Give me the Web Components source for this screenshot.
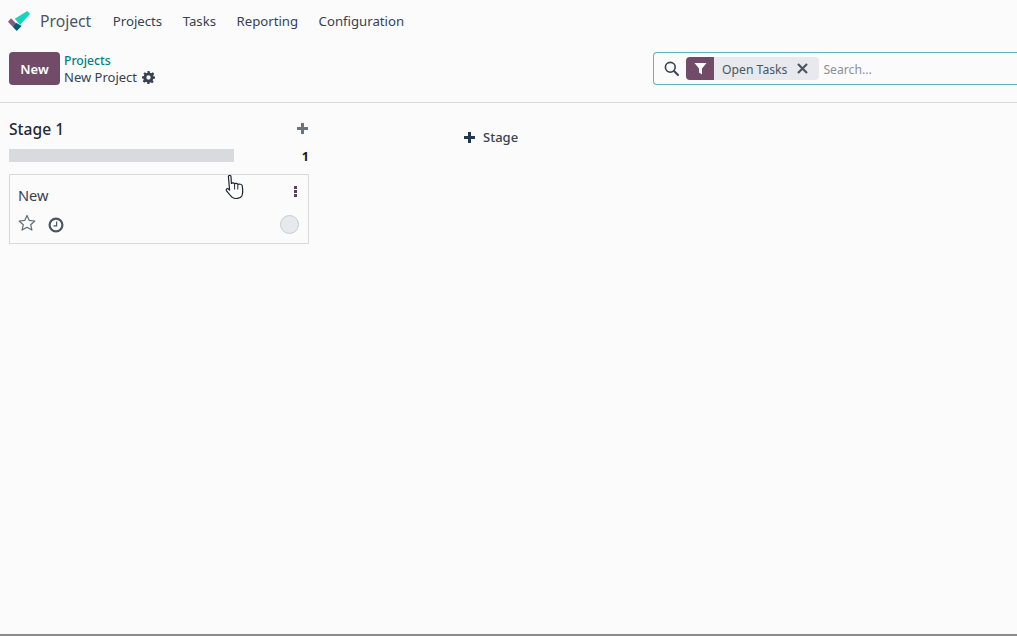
<!DOCTYPE html>
<html>
<head>
<meta charset="utf-8">
<title>Project</title>
<style>
  html, body { margin: 0; height: 100%; }
  body {
    height: 636px;
    overflow: hidden;
    background: #fbfbfb;
    font-family: "Noto Sans", "Open Sans", sans-serif;
    color: #374151;
    display: flex;
    flex-direction: column;
    position: relative;
  }
</style>
</head>
<body>
<app-navbar></app-navbar>
<control-panel></control-panel>
<kanban-board>
  <kanban-column title="Stage 1" count="1">
    <kanban-card title="New"></kanban-card>
  </kanban-column>
</kanban-board>
<hand-cursor></hand-cursor>

<script>
// Top navigation bar
class AppNavbar extends HTMLElement {
  constructor() {
    super();
    this.attachShadow({ mode: 'open' });
    this.shadowRoot.innerHTML = `
      <style>
        :host { display: flex; align-items: center; height: 42px; flex: none; padding-left: 8px; }
        svg { width: 22px; height: 20px; flex: none; margin-right: 10px; }
        .brand { font-size: 15.7px; color: #4b5563; margin-right: 21.5px; }
        nav { display: flex; gap: 20.5px; font-size: 13.2px; color: #374151; }
      </style>
      <svg viewBox="0 0 22 20">
        <path d="M0 10.7 L3 7.3 L8 12.3 L4.7 15.7 Z" fill="#875a7b"/>
        <path d="M4.7 15.7 L8 11.7 L13.7 15 L8.7 20 Z" fill="#005e7a"/>
        <path d="M19.3 0 L22 3 L12 14 L6.8 7.8 Z" fill="#1ad3bb"/>
      </svg>
      <span class="brand">Project</span>
      <nav><span>Projects</span><span>Tasks</span><span>Reporting</span><span>Configuration</span></nav>
    `;
  }
}

// Search box with the facet
class SearchBar extends HTMLElement {
  constructor() {
    super();
    this.attachShadow({ mode: 'open' });
    this.shadowRoot.innerHTML = `
      <style>
        :host {
          display: flex; align-items: center; box-sizing: border-box;
          width: 364px; height: 33px; margin-right: 0;
          border: 1px solid #64b4b8; border-right: none; border-radius: 4px 0 0 4px;
          padding-left: 10px; font-size: 12.2px;
        }
        .glass { width: 15px; height: 15px; margin-right: 7px; flex: none; }
        .facet { display: flex; align-items: center; height: 23px; background: #e7e9ed; border-radius: 4px; margin-right: 4px; }
        .tag { width: 28px; height: 23px; background: #714b67; border-radius: 4px 0 0 4px; display: flex; align-items: center; justify-content: center; }
        .tag svg { width: 13px; height: 13px; }
        .label { padding: 2px 10px 0 8px; color: #4b5563; }
        .x { width: 11px; height: 11px; margin-right: 11px; }
        .ph { color: #8c9099; padding-top: 2px; }
      </style>
      <svg class="glass" viewBox="0 0 15 15" fill="none" stroke="#374151" stroke-width="1.6">
        <circle cx="6.3" cy="6.3" r="4.9"/><path d="M10 10 L14 14" stroke-linecap="round" stroke-width="1.9"/>
      </svg>
      <div class="facet">
        <div class="tag"><svg viewBox="0 0 13 13"><path d="M0.5 1 H12.5 L8 6.6 V12.5 L5 10.5 V6.6 Z" fill="#fff"/></svg></div>
        <span class="label">Open Tasks</span>
        <svg class="x" viewBox="0 0 11 11" stroke="#4b5563" stroke-width="2.2"><path d="M1 1 L10 10 M10 1 L1 10"/></svg>
      </div>
      <span class="ph">Search...</span>
    `;
  }
}

// Breadcrumb row with New button and search
class ControlPanel extends HTMLElement {
  constructor() {
    super();
    this.attachShadow({ mode: 'open' });
    this.shadowRoot.innerHTML = `
      <style>
        :host {
          display: flex; align-items: flex-start; justify-content: space-between;
          box-sizing: border-box; height: 61px; flex: none;
          padding: 10px 0 0 9px; border-bottom: 1px solid #d8dadd;
        }
        .left { display: flex; align-items: flex-start; gap: 4px; }
        button {
          width: 51px; height: 33px; border: none; border-radius: 4px; padding: 0;
          background: #714b67; color: #fff; font: 600 13px "Noto Sans", sans-serif;
        }
        .crumbs { display: flex; flex-direction: column; font-size: 13px; line-height: 17px; }
        .link { color: #017e84; font-weight: 500; font-size: 12.2px; }
        .cur { display: flex; align-items: center; gap: 5px; color: #374151; }
        .cur svg { width: 13px; height: 13px; }
      </style>
      <div class="left">
        <button>New</button>
        <div class="crumbs">
          <span class="link">Projects</span>
          <span class="cur">New Project
            <svg viewBox="0 0 24 24"><path fill="#374151" fill-rule="evenodd" d="M10 0h4l.7 3.4 2.2.9L19.8 2.4 22.6 5.2 20.7 8.1l.9 2.2L24 10v4l-3.4.7-.9 2.2 1.9 2.9-2.8 2.8-2.9-1.9-2.2.9L14 24h-4l-.7-3.4-2.2-.9-2.9 1.9-2.8-2.8 1.9-2.9-.9-2.2L0 14v-4l3.4-.7.9-2.2L2.4 5.2 5.2 2.4l2.9 1.9 2.2-.9zM12 8a4 4 0 1 0 0 8 4 4 0 0 0 0-8z"/></svg>
          </span>
        </div>
      </div>
      <search-bar></search-bar>
    `;
  }
}

// Board area: columns plus the add-stage button
class KanbanBoard extends HTMLElement {
  constructor() {
    super();
    this.attachShadow({ mode: 'open' });
    this.shadowRoot.innerHTML = `
      <style>
        :host {
          display: flex; flex: 1; align-items: flex-start; box-sizing: border-box;
          padding: 14px 0 0 9px; border-bottom: 2px solid #8a8a8a;
        }
        .add { display: flex; align-items: center; gap: 8px; margin: 11px 0 0 155px; font-size: 13px; font-weight: 500; color: #374151; }
        .add svg { width: 11px; height: 11px; }
      </style>
      <slot></slot>
      <div class="add">
        <svg viewBox="0 0 11 11"><path d="M4 0h3v4h4v3H7v4H4V7H0V4h4z" fill="#25364f"/></svg>
        <span>Stage</span>
      </div>
    `;
  }
}

class KanbanColumn extends HTMLElement {
  constructor() {
    super();
    this.attachShadow({ mode: 'open' });
    this.shadowRoot.innerHTML = `
      <style>
        :host { display: block; width: 300px; flex: none; }
        .head { display: flex; align-items: center; justify-content: space-between; height: 22px; }
        .title { font-size: 15.6px; font-weight: 500; color: #1f2937; padding-top: 2px; }
        .head svg { width: 11px; height: 11px; margin-right: 1px; }
        .bar { display: flex; align-items: center; justify-content: space-between; height: 14px; margin: 9px 0 12px; }
        .progress { width: 225px; height: 13px; background: #d8dadd; }
        .count { font-size: 12.5px; font-weight: 700; color: #111827; padding-top: 2px; }
      </style>
      <div class="head">
        <span class="title">${this.getAttribute('title')}</span>
        <svg viewBox="0 0 11 11"><path d="M4 0h3v4h4v3H7v4H4V7H0V4h4z" fill="#6b7280"/></svg>
      </div>
      <div class="bar">
        <div class="progress"></div>
        <span class="count">${this.getAttribute('count')}</span>
      </div>
      <slot></slot>
    `;
  }
}

class KanbanCard extends HTMLElement {
  constructor() {
    super();
    this.attachShadow({ mode: 'open' });
    this.shadowRoot.innerHTML = `
      <style>
        :host {
          display: block; box-sizing: border-box; height: 70px;
          border: 1px solid #d8dadd; padding: 11px 9px 0 8px;
        }
        .top { display: flex; justify-content: space-between; align-items: flex-start; height: 20px; }
        .name { font-size: 14.6px; line-height: 18px; color: #374151; }
        .dots { width: 3px; height: 11px; margin: 0 2px 0 0; }
        .row { display: flex; align-items: flex-start; justify-content: space-between; margin-top: 8px; }
        .icons { display: flex; align-items: flex-start; gap: 12px; }
        .star { width: 18px; height: 18px; }
        .clock { width: 16px; height: 16px; margin-top: 3px; }
        .state { width: 19px; height: 19px; box-sizing: border-box; border: 1px solid #c9ccd2; border-radius: 50%; background: #e7e9ed; margin-top: 1px; }
      </style>
      <div class="top">
        <span class="name">${this.getAttribute('title')}</span>
        <svg class="dots" viewBox="0 0 3 11" fill="#5b3f5e"><rect width="3" height="3" y="0"/><rect width="3" height="3" y="4"/><rect width="3" height="3" y="8"/></svg>
      </div>
      <div class="row">
        <div class="icons">
          <svg class="star" viewBox="0 0 18 18"><path d="M9 1.4 L11.3 6.4 L16.8 7 L12.7 10.7 L13.9 16.1 L9 13.3 L4.1 16.1 L5.3 10.7 L1.2 7 L6.7 6.4 Z" fill="none" stroke="#5f6b7c" stroke-width="1.2" stroke-linejoin="round"/></svg>
          <svg class="clock" viewBox="0 0 16 16" fill="none" stroke="#4b5563"><circle cx="8" cy="8" r="6.4" stroke-width="2.2"/><path d="M8.6 4.5 V8.8 H5.5" stroke-width="1.2"/></svg>
        </div>
        <div class="state"></div>
      </div>
    `;
  }
}

// Mouse pointer caught in the screenshot, lies over the card
class HandCursor extends HTMLElement {
  constructor() {
    super();
    this.attachShadow({ mode: 'open' });
    this.shadowRoot.innerHTML = `
      <style>
        :host { position: absolute; left: 225px; top: 174px; width: 20px; height: 26px; }
        svg { width: 20px; height: 26px; display: block; }
      </style>
      <svg viewBox="0 0 20 26">
        <path d="M3.4 2.5 C3.4 1 6 1 6 2.5 L6.4 9.5 C7.2 8.6 9 8.8 9.6 9.8 C10.6 9 12.4 9.4 12.8 10.4 C14 9.8 17 10.2 17.2 11.6 C17.8 15 18 19 16.8 22 C15.6 24.8 9.6 25.2 7.4 23.4 C5.6 22 3.4 19 1.6 16.8 C0.6 15.6 1.8 14 3.2 14.8 L4.6 16 Z" fill="#fff" stroke="#1f2430" stroke-width="1.2" stroke-linejoin="round"/>
        <path d="M9.6 10 V15.5 M12.8 10.6 V15.5" stroke="#1f2430" stroke-width="1" fill="none"/>
      </svg>
    `;
  }
}

customElements.define('app-navbar', AppNavbar);
customElements.define('search-bar', SearchBar);
customElements.define('control-panel', ControlPanel);
customElements.define('kanban-board', KanbanBoard);
customElements.define('kanban-column', KanbanColumn);
customElements.define('kanban-card', KanbanCard);
customElements.define('hand-cursor', HandCursor);
</script>
</body>
</html>
